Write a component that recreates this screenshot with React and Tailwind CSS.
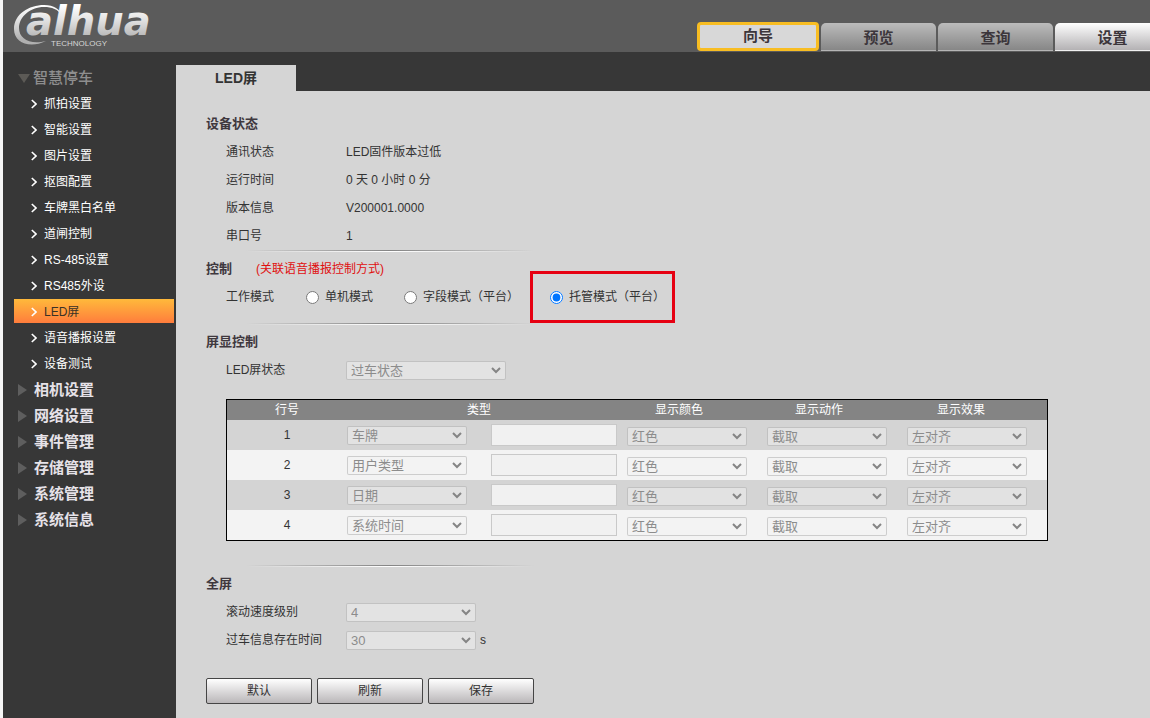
import clsx from "clsx";

const topTabs = ["预览", "查询"];

const parkingItems = [
  "抓拍设置",
  "智能设置",
  "图片设置",
  "抠图配置",
  "车牌黑白名单",
  "道闸控制",
  "RS-485设置",
  "RS485外设",
  "LED屏",
  "语音播报设置",
  "设备测试",
];

const menuGroups = ["相机设置", "网络设置", "事件管理", "存储管理", "系统管理", "系统信息"];

const deviceStatus = [
  ["通讯状态", "LED固件版本过低"],
  ["运行时间", "0 天 0 小时 0 分"],
  ["版本信息", "V200001.0000"],
  ["串口号", "1"],
];

const workModes = ["单机模式", "字段模式（平台）", "托管模式（平台）"];

const lineTypes = ["车牌", "用户类型", "日期", "系统时间"];

function Logo() {
  return (
    <svg width="146" height="50" viewBox="0 0 146 50" role="img" aria-label="alhua technology">
      <defs>
        <linearGradient id="silver" x1="0" y1="0" x2="0" y2="50" gradientUnits="userSpaceOnUse">
          <stop offset="0.1" stopColor="#ffffff" />
          <stop offset="0.4" stopColor="#e2e2e2" />
          <stop offset="0.8" stopColor="#b0b0b0" />
        </linearGradient>
      </defs>
      {/* ring around the first letter */}
      <path
        d="M34 41 C18 49 2 43 2 29 C2 14 17 5 32 5 C42 5 48 9 50 16 C46 9 40 7 32 7 C18 7 7 17 7 28 C7 39 18 45 34 41Z"
        fill="url(#silver)"
      />
      <text
        x="14"
        y="35"
        fontFamily="'DejaVu Sans', sans-serif"
        fontSize="40"
        fontWeight="700"
        fontStyle="italic"
        fill="url(#silver)"
      >
        alhua
      </text>
      <text x="39" y="46" fontFamily="'Liberation Sans', sans-serif" fontSize="8" fill="#d6d6d6">
        TECHNOLOGY
      </text>
    </svg>
  );
}

function Header() {
  return (
    <header className="flex h-13 items-end justify-between overflow-hidden bg-[#5b5b5b] pl-[9px]">
      <a href="#home" className="self-start">
        <Logo />
      </a>
      <nav className="-mr-5 flex shrink-0 items-end gap-[2px] pb-px text-[15px] font-bold text-[#3c363b]">
        <button className="h-[29px] w-[122px] rounded-[4px] border-3 border-[#f8bd22] bg-[#d8d8d8] pb-[2px] leading-5">
          向导
        </button>
        {topTabs.map((tab) => (
          <button
            key={tab}
            className="h-7 w-[115px] rounded-t-[5px] border-b border-[#b5b5b5] bg-linear-to-b from-[#bcbcbc] to-[#878787] pt-[3px]"
          >
            {tab}
          </button>
        ))}
        <button className="h-7 w-[115px] rounded-t-[5px] border-b border-[#f0f0f0] bg-linear-to-b from-white to-[#b4b2b4] pt-[3px]">
          设置
        </button>
      </nav>
    </header>
  );
}

function Sidebar() {
  return (
    <aside className="w-[173px] shrink-0 bg-[#373737] pt-[13px] pr-[2px] pl-[11px]">
      <a href="#parking" className="flex h-[26px] items-center gap-[3px] pl-1 text-[15px] text-[#8e8e8e]">
        <svg width="12" height="9" viewBox="0 0 12 9">
          <path d="M0 0H12L6 9Z" fill="#5c5a56" />
        </svg>
        <span className="font-medium">智慧停车</span>
      </a>
      <ul>
        {parkingItems.map((item) => {
          const active = item === "LED屏";
          return (
            <li key={item} className="h-[26px]">
              <a
                href="#item"
                className={clsx(
                  "flex h-6 items-center gap-[7px] pt-[2px] pl-[17px] text-xs",
                  active ? "bg-linear-to-b from-[#ffb93b] to-[#ff7c3c] text-[#3a3226]" : "text-white"
                )}
              >
                <svg width="6" height="10" viewBox="0 0 6 10" fill="none" stroke="#fff" strokeWidth="1.6">
                  <path d="M0.8 1L5 5L0.8 9" />
                </svg>
                {item}
              </a>
            </li>
          );
        })}
      </ul>
      <ul>
        {menuGroups.map((group) => (
          <li key={group}>
            <a href="#group" className="flex h-[26px] items-center gap-[7px] pl-1 text-[15px] font-bold text-[#e6e2e8]">
              <svg width="9" height="12" viewBox="0 0 9 12">
                <path d="M0 0V12L9 6Z" fill="#5e5e5e" />
              </svg>
              {group}
            </a>
          </li>
        ))}
      </ul>
    </aside>
  );
}

function Select({ value, id, label, className }) {
  return (
    <span className={clsx("relative inline-block h-[19px] align-top", className)}>
      <select
        id={id}
        aria-label={label}
        disabled
        className="block h-full w-full appearance-none rounded-[2px] border border-[#767676]/30 bg-[#f5f5f5]/45 pl-1 text-[13px] leading-[17px] text-[#8c8c8c]"
      >
        <option>{value}</option>
      </select>
      <svg
        className="pointer-events-none absolute top-[6px] right-[5px]"
        width="10"
        height="7"
        viewBox="0 0 10 7"
        fill="none"
        stroke="#858585"
        strokeWidth="2"
      >
        <path d="M1 1L5 5L9 1" />
      </svg>
    </span>
  );
}

function Heading({ children }) {
  return <h2 className="flex h-7 items-center text-[13px] font-bold text-[#3f383e]">{children}</h2>;
}

function Row({ label, htmlFor, children }) {
  return (
    <div className="flex h-7 items-center pl-5">
      <label htmlFor={htmlFor} className="w-[120px]">
        {label}
      </label>
      {children}
    </div>
  );
}

function Divider({ className }) {
  return (
    <div className={clsx("mb-[3px] ml-10 w-72", className)}>
      <div className="h-px bg-linear-to-r from-transparent via-[#858585] to-transparent" />
      <div className="h-px bg-linear-to-r from-transparent via-white to-transparent" />
    </div>
  );
}

function LineTable() {
  return (
    <table className="mt-[15px] ml-5 w-[822px] table-fixed border-separate border-spacing-0 border border-black">
      <colgroup>
        <col className="w-[120px]" />
        <col className="w-[272px]" />
        <col className="w-[140px]" />
        <col className="w-[140px]" />
        <col />
      </colgroup>
      <thead>
        <tr className="h-5 bg-[#848484] text-white *:p-0 *:leading-5 *:font-normal">
          <th>行号</th>
          <th>
            <span className="pr-2">类型</span>
          </th>
          <th>
            <span className="pr-5">显示颜色</span>
          </th>
          <th>
            <span className="pr-5">显示动作</span>
          </th>
          <th>
            <span className="pr-6">显示效果</span>
          </th>
        </tr>
      </thead>
      <tbody>
        {lineTypes.map((type, i) => (
          <tr key={type} className="h-[30px] odd:bg-[#d4d4d4] even:bg-[#f3f3f3]">
            <td className="p-0 text-center">{i + 1}</td>
            <td className="p-0">
              <div className="flex items-center gap-6">
                <Select label="类型" value={type} className="w-[120px]" />
                <input
                  type="text"
                  disabled
                  aria-label="内容"
                  className="h-[22px] w-[126px] border border-[#c9c9c9] bg-[#f1f1f1]"
                />
              </div>
            </td>
            <td className="pt-[2px] pb-0 pl-2">
              <Select label="显示颜色" value="红色" className="w-[120px]" />
            </td>
            <td className="pt-[2px] pb-0 pl-2">
              <Select label="显示动作" value="截取" className="w-[120px]" />
            </td>
            <td className="pt-[2px] pb-0 pl-2">
              <Select label="显示效果" value="左对齐" className="w-[120px]" />
            </td>
          </tr>
        ))}
      </tbody>
    </table>
  );
}

function Panel() {
  return (
    <div className="grow bg-[#d5d5d5] px-[30px] pt-[19px] pb-3 text-xs text-[#333]">
      <Heading>设备状态</Heading>
      {deviceStatus.map(([label, value]) => (
        <div key={label} className="flex h-7 items-center pl-5">
          <span className="w-[120px]">{label}</span>
          <span>{value}</span>
        </div>
      ))}
      <Divider />

      <div className="flex items-center gap-6">
        <Heading>控制</Heading>
        <span className="text-[#e01010]">(关联语音播报控制方式)</span>
      </div>
      <div className="flex h-7 items-center pl-5">
        <span className="w-20">工作模式</span>
        <div className="flex gap-[31px]">
          {workModes.map((mode, i) => (
            <label key={mode} className="relative flex items-center gap-[6px]">
              <input type="radio" name="workMode" defaultChecked={i === 2} className="size-[13px]" />
              {mode}
              {i === 2 && (
                <span className="pointer-events-none absolute -top-[18px] -right-[10px] -bottom-[18px] -left-5 border-3 border-[#e60012]" />
              )}
            </label>
          ))}
        </div>
      </div>
      <Divider className="mt-3" />

      <Heading>屏显控制</Heading>
      <Row label="LED屏状态" htmlFor="ledState">
        <Select id="ledState" value="过车状态" className="w-40" />
      </Row>
      <LineTable />
      <Divider className="mt-6" />

      <Heading>全屏</Heading>
      <Row label="滚动速度级别" htmlFor="speed">
        <Select id="speed" value="4" className="w-[130px]" />
      </Row>
      <Row label="过车信息存在时间" htmlFor="keepTime">
        <Select id="keepTime" value="30" className="w-[130px]" />
        <span className="pl-1">s</span>
      </Row>
      <div className="mt-6 flex gap-[5px]">
        {["默认", "刷新", "保存"].map((name) => (
          <button
            key={name}
            className="h-[26px] w-[106px] rounded-[2px] border border-[#454545] bg-linear-to-b from-white to-[#bab7b9]"
          >
            {name}
          </button>
        ))}
      </div>
    </div>
  );
}

export default function App() {
  return (
    <div className="flex min-h-screen flex-col border-l-3 border-[#f6f6f6] font-['Liberation_Sans','Noto_Sans_CJK_SC',sans-serif]">
      <Header />
      <div className="flex grow">
        <Sidebar />
        <main className="flex min-w-0 grow flex-col">
          <div className="bg-[#373737] pt-[13px]">
            <h1 className="flex h-[26px] w-[120px] items-center justify-center bg-[#d5d5d5] text-sm font-bold text-[#333]">
              LED屏
            </h1>
          </div>
          <Panel />
        </main>
      </div>
    </div>
  );
}
